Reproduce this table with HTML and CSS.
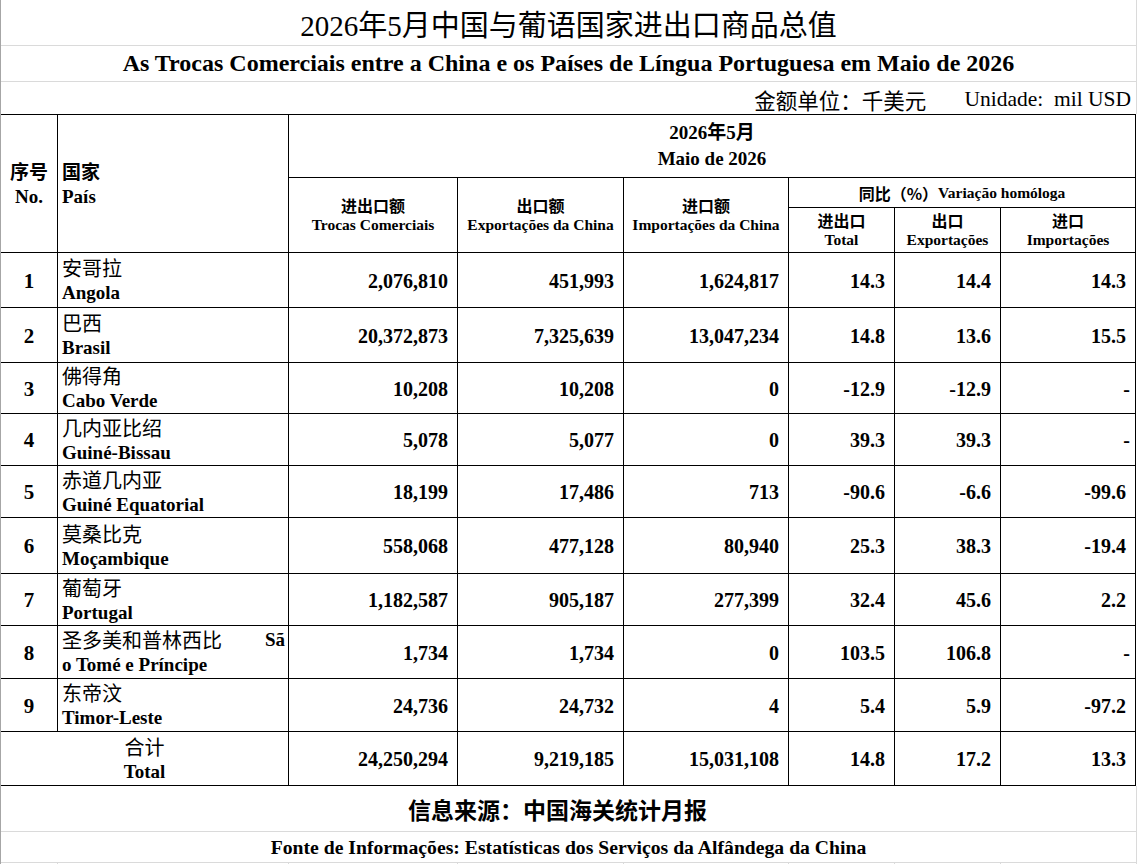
FILE: index.html
```html
<!DOCTYPE html>
<html lang="zh-CN">
<head>
<meta charset="utf-8">
<title>2026年5月中国与葡语国家进出口商品总值</title>
<link rel="stylesheet" href="styles.css">
</head>
<body>
<div class="sheet">
  <div class="band title">2026年5月中国与葡语国家进出口商品总值</div>
  <div class="band subtitle">As Trocas Comerciais entre a China e os Países de Língua Portuguesa em Maio de 2026</div>
  <div class="band unit"><span class="unit-cn">金额单位：千美元</span><span class="unit-pt">Unidade:  mil USD</span></div>

  <div class="grid">
    <div class="cell h-no stack"><span class="cjk-b">序号</span><span class="lat-b">No.</span></div>
    <div class="cell h-country stack left"><span class="cjk-b">国家</span><span class="lat-b">País</span></div>
    <div class="cell h-month stack"><span class="hm">2026年5月</span><span class="hm">Maio de 2026</span></div>
    <div class="cell h-val1 stack small"><span class="cjk-s">进出口额</span><span class="lat-s">Trocas Comerciais</span></div>
    <div class="cell h-val2 stack small"><span class="cjk-s">出口额</span><span class="lat-s">Exportações da China</span></div>
    <div class="cell h-val3 stack small"><span class="cjk-s">进口额</span><span class="lat-s">Importações da China</span></div>
    <div class="cell h-yoy"><span class="cjk-s">同比（%）</span><span class="lat-s">Variação homóloga</span></div>
    <div class="cell stack small2"><span class="cjk-s">进出口</span><span class="lat-s">Total</span></div>
    <div class="cell stack small2"><span class="cjk-s">出口</span><span class="lat-s">Exportações</span></div>
    <div class="cell stack small2"><span class="cjk-s">进口</span><span class="lat-s">Importações</span></div>

    <div class="cell seq">1</div>
    <div class="cell name"><span class="cn">安哥拉</span><span class="pt">Angola</span></div>
    <div class="cell num">2,076,810</div><div class="cell num">451,993</div><div class="cell num">1,624,817</div>
    <div class="cell num">14.3</div><div class="cell num">14.4</div><div class="cell num">14.3</div>

    <div class="cell seq">2</div>
    <div class="cell name"><span class="cn">巴西</span><span class="pt">Brasil</span></div>
    <div class="cell num">20,372,873</div><div class="cell num">7,325,639</div><div class="cell num">13,047,234</div>
    <div class="cell num">14.8</div><div class="cell num">13.6</div><div class="cell num">15.5</div>

    <div class="cell seq">3</div>
    <div class="cell name"><span class="cn">佛得角</span><span class="pt">Cabo Verde</span></div>
    <div class="cell num">10,208</div><div class="cell num">10,208</div><div class="cell num">0</div>
    <div class="cell num">-12.9</div><div class="cell num">-12.9</div><div class="cell num dash">-</div>

    <div class="cell seq">4</div>
    <div class="cell name"><span class="cn">几内亚比绍</span><span class="pt">Guiné-Bissau</span></div>
    <div class="cell num">5,078</div><div class="cell num">5,077</div><div class="cell num">0</div>
    <div class="cell num">39.3</div><div class="cell num">39.3</div><div class="cell num dash">-</div>

    <div class="cell seq">5</div>
    <div class="cell name"><span class="cn">赤道几内亚</span><span class="pt">Guiné Equatorial</span></div>
    <div class="cell num">18,199</div><div class="cell num">17,486</div><div class="cell num">713</div>
    <div class="cell num">-90.6</div><div class="cell num">-6.6</div><div class="cell num">-99.6</div>

    <div class="cell seq">6</div>
    <div class="cell name"><span class="cn">莫桑比克</span><span class="pt">Moçambique</span></div>
    <div class="cell num">558,068</div><div class="cell num">477,128</div><div class="cell num">80,940</div>
    <div class="cell num">25.3</div><div class="cell num">38.3</div><div class="cell num">-19.4</div>

    <div class="cell seq">7</div>
    <div class="cell name"><span class="cn">葡萄牙</span><span class="pt">Portugal</span></div>
    <div class="cell num">1,182,587</div><div class="cell num">905,187</div><div class="cell num">277,399</div>
    <div class="cell num">32.4</div><div class="cell num">45.6</div><div class="cell num">2.2</div>

    <div class="cell seq">8</div>
    <div class="cell name"><span class="cn split"><span>圣多美和普林西比</span><span class="pt-inline">Sã</span></span><span class="pt">o Tomé e Príncipe</span></div>
    <div class="cell num">1,734</div><div class="cell num">1,734</div><div class="cell num">0</div>
    <div class="cell num">103.5</div><div class="cell num">106.8</div><div class="cell num dash">-</div>

    <div class="cell seq">9</div>
    <div class="cell name"><span class="cn">东帝汶</span><span class="pt">Timor-Leste</span></div>
    <div class="cell num">24,736</div><div class="cell num">24,732</div><div class="cell num">4</div>
    <div class="cell num">5.4</div><div class="cell num">5.9</div><div class="cell num">-97.2</div>

    <div class="cell total-label stack"><span class="cn">合计</span><span class="pt">Total</span></div>
    <div class="cell num">24,250,294</div><div class="cell num">9,219,185</div><div class="cell num">15,031,108</div>
    <div class="cell num">14.8</div><div class="cell num">17.2</div><div class="cell num">13.3</div>
  </div>

  <div class="band src-cn">信息来源：中国海关统计月报</div>
  <div class="band src-pt">Fonte de Informações: Estatísticas dos Serviços da Alfândega da China</div>
  <div class="tail">
    <span></span><span></span><span></span><span></span><span></span><span></span><span></span><span></span>
  </div>
</div>
</body>
</html>
```

FILE: styles.css
```css
* { box-sizing: border-box; }

html, body {
  margin: 0;
  padding: 0;
  background: #ffffff;
}

body {
  color: #000;
  font-family: "Liberation Serif", "Noto Sans CJK SC", serif;
}

.sheet {
  width: 1137px;
  border-left: 1px solid #a6a6a6;
}

.band {
  display: flex;
  align-items: center;
  justify-content: center;
  border-right: 1px solid #dadada;
  border-bottom: 1px solid #dadada;
  white-space: nowrap;
}

.title {
  height: 46px;
  font-size: 29px;
  font-family: "Liberation Serif", "Noto Sans CJK SC", serif;
  font-weight: 400;
}

.subtitle {
  height: 36px;
  font-size: 24px;
  font-weight: 700;
}

.unit {
  height: 32px;
  border-bottom: none;
  justify-content: flex-end;
  padding-right: 5px;
  font-size: 21.5px;
  padding-top: 2px;
}

.unit-cn {
  font-family: "Noto Sans CJK SC", sans-serif;
  font-size: 21.5px;
  margin-right: 38px;
}

.unit-pt {
  white-space: pre;
}

.grid {
  width: 1135px;
  display: grid;
  grid-template-columns: 57px 231px 169px 166px 165px 106px 106px 135px;
  grid-template-rows: 63px 30px 45px 55px 55px 51px 52px 52px 56px 52px 53px 53px 54px;
  border-top: 1px solid #000;
}

.cell {
  display: flex;
  align-items: center;
  justify-content: center;
  border-right: 1px solid #000;
  border-bottom: 1px solid #000;
  white-space: nowrap;
}

.stack {
  flex-direction: column;
}

.left {
  align-items: flex-start;
  padding-left: 4px;
}

.h-no { grid-row: 1 / span 3; grid-column: 1; }
.h-country { grid-row: 1 / span 3; grid-column: 2; }
.h-month { grid-row: 1; grid-column: 3 / span 6; }
.h-val1 { grid-row: 2 / span 2; grid-column: 3; }
.h-val2 { grid-row: 2 / span 2; grid-column: 4; }
.h-val3 { grid-row: 2 / span 2; grid-column: 5; }
.h-yoy { grid-row: 2; grid-column: 6 / span 3; }

.cjk-b {
  font-family: "Noto Sans CJK SC", sans-serif;
  font-weight: 700;
  font-size: 19px;
  line-height: 26px;
}

.lat-b {
  font-weight: 700;
  font-size: 19px;
  line-height: 26px;
}

.hm {
  font-weight: 700;
  font-size: 19px;
  line-height: 26px;
}

.cjk-s {
  font-family: "Noto Sans CJK SC", sans-serif;
  font-weight: 700;
  font-size: 16px;
  line-height: 19px;
}

.lat-s {
  font-weight: 700;
  font-size: 15.5px;
  line-height: 19px;
}

.small2 .cjk-s,
.small2 .lat-s {
  line-height: 20px;
}

.h-yoy .cjk-s,
.h-yoy .lat-s {
  line-height: 20px;
}

.seq {
  font-weight: 700;
  font-size: 21px;
  padding-top: 2px;
}

.num {
  justify-content: flex-end;
  padding-right: 9px;
  font-weight: 700;
  font-size: 20px;
  padding-top: 2px;
}

.num.dash {
  padding-right: 5px;
}

.name {
  flex-direction: column;
  align-items: stretch;
  justify-content: center;
  padding-left: 4px;
  padding-right: 3px;
}

.cn {
  font-family: "Noto Sans CJK SC", sans-serif;
  font-weight: 400;
  font-size: 20px;
  line-height: 25px;
}

.pt {
  font-weight: 700;
  font-size: 19px;
  line-height: 25px;
}

.split {
  display: flex;
  justify-content: space-between;
}

.pt-inline {
  font-family: "Liberation Serif", serif;
  font-weight: 700;
  font-size: 19px;
}

.total-label {
  grid-column: 1 / span 2;
}

.src-cn {
  height: 46px;
  padding-right: 22px;
  font-family: "Noto Sans CJK SC", sans-serif;
  font-weight: 700;
  font-size: 23px;
}

.src-pt {
  height: 31px;
  font-weight: 700;
  font-size: 19.7px;
}

.tail {
  height: 2px;
  width: 1136px;
  display: grid;
  grid-template-columns: 57px 231px 169px 166px 165px 106px 106px 136px;
}

.tail span {
  border-right: 1px solid #dadada;
}
```
